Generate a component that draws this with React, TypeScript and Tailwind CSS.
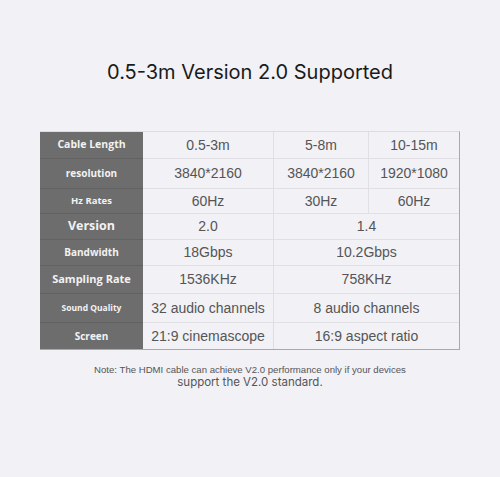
import React from "react";

type Row = { label: string; cls: string; h: string; cells: string[] };

const rows: Row[] = [
  { label: "Cable Length", cls: "text-[10.5px]", h: "h-[27px]", cells: ["0.5-3m", "5-8m", "10-15m"] },
  { label: "resolution", cls: "text-[10px]", h: "h-[30px]", cells: ["3840*2160", "3840*2160", "1920*1080"] },
  { label: "Hz Rates", cls: "text-[9.5px]", h: "h-[25px]", cells: ["60Hz", "30Hz", "60Hz"] },
  { label: "Version", cls: "text-[12.5px]", h: "h-[26px]", cells: ["2.0", "1.4"] },
  { label: "Bandwidth", cls: "text-[10px]", h: "h-[26px]", cells: ["18Gbps", "10.2Gbps"] },
  { label: "Sampling Rate", cls: "text-[11px]", h: "h-[28px]", cells: ["1536KHz", "758KHz"] },
  { label: "Sound Quality", cls: "text-[8.5px]", h: "h-[29px]", cells: ["32 audio channels", "8 audio channels"] },
  { label: "Screen", cls: "text-[10px]", h: "h-[26px]", cells: ["21:9 cinemascope", "16:9 aspect ratio"] },
];

export default function App() {
  return (
    <div className="w-[500px] h-[477px] bg-[#f1f1f6] flex flex-col items-center font-['Inter',sans-serif]">
      <h1 className="mt-[60px] text-[20px] leading-[24px] text-[#1a1a1a] font-normal">
        0.5-3m Version 2.0 Supported
      </h1>
      <div className="mt-[47px] grid grid-cols-[103px_131px_95px_90px] border-r border-b border-[#a9a9ad] border-t border-t-[#dcdce0]">
        {rows.map((r, i) => (
          <React.Fragment key={i}>
            <div
              className={`${r.h} bg-[#6d6d6d] flex items-center justify-center text-[#f2f2f2] font-bold font-['Open_Sans',sans-serif] ${r.cls} ${i < rows.length - 1 ? "border-b border-[#626262]" : ""}`}
            >
              {r.label}
            </div>
            {r.cells.map((c, j) => (
              <div
                key={j}
                className={`${r.h} ${r.cells.length === 2 && j === 1 ? "col-span-2" : ""} flex items-center justify-center text-[14px] text-[#555] font-['Liberation_Sans',Arial,sans-serif] ${i < rows.length - 1 ? "border-b border-[#e0e0e4]" : ""} ${j < r.cells.length - 1 ? "border-r border-[#dddde2]" : ""}`}
              >
                {c}
              </div>
            ))}
          </React.Fragment>
        ))}
      </div>
      <p className="mt-[14px] text-[9.6px] leading-[12px] text-[#555] text-center font-['Liberation_Sans',Arial,sans-serif]">
        Note: The HDMI cable can achieve V2.0 performance only if your devices
      </p>
      <p className="text-[11.5px] leading-[13px] text-[#555] text-center">
        support the V2.0 standard.
      </p>
    </div>
  );
}
